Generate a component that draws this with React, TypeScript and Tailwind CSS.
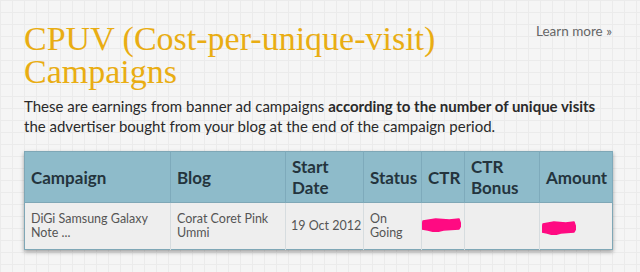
type Row = { campaign: string; blog: string; start: string; status: string };

const rows: Row[] = [
  { campaign: 'DiGi Samsung Galaxy Note ...', blog: 'Corat Coret Pink Ummi', start: '19 Oct 2012', status: 'On Going' },
];

const cols = [
  { label: 'Campaign', w: 'w-[146px]' },
  { label: 'Blog', w: 'w-[115px]' },
  { label: 'Start Date', w: 'w-[78px]' },
  { label: 'Status', w: 'w-[58px]' },
  { label: 'CTR', w: 'w-[43px]' },
  { label: 'CTR Bonus', w: 'w-[75px]' },
  { label: 'Amount', w: 'w-[73px]' },
];

// hidden value, scribbled over
function Scribble({ w, h }: { w: number; h: number }) {
  return (
    <svg width={w} height={h} viewBox={`0 0 ${w} ${h}`} className="block">
      <path
        d={`M1 3 L${w * 0.35} 1 L${w * 0.7} 2 L${w - 2} 1 L${w} ${h * 0.5} L${w - 2} ${h - 3} L${w * 0.55} ${h - 2} L${w * 0.35} ${h} L${w * 0.15} ${h - 2} L0 ${h - 3} Z`}
        fill="#ff0a82"
        stroke="#ff0a82"
        strokeWidth="1.5"
        strokeLinejoin="round"
      />
    </svg>
  );
}

export default function App() {
  return (
    <div className="w-[640px] h-[272px] overflow-hidden bg-[#f5f5f5] bg-[linear-gradient(#ebebeb_1px,transparent_1px),linear-gradient(90deg,#ebebeb_1px,transparent_1px)] bg-[size:12px_12px] font-['Lato',sans-serif] text-[#333]">
      <div className="px-[24px] pt-[22px]">
        <div className="flex justify-between items-start">
          <h1 className="font-['Liberation_Serif',serif] text-[34px] leading-[33px] text-[#e9ad13] w-[440px]">
            CPUV (Cost-per-unique-visit) Campaigns
          </h1>
          <a className="text-[13.5px] text-[#666] -mt-[1px] mr-[4px]">Learn more »</a>
        </div>
        <p className="mt-[8px] text-[15px] leading-[20px] text-[#2a2a2a]">
          These are earnings from banner ad campaigns{' '}
          <span className="font-bold">according to the number of unique visits</span> the advertiser bought from your
          blog at the end of the campaign period.
        </p>
        <table className="mt-[15px] w-[588px] border-collapse border border-[#7fa7b6] shadow-[0_2px_4px_rgba(0,0,0,0.35)] table-fixed">
          <thead>
            <tr className="bg-[#8ebbca] h-[51px]">
              {cols.map((c) => (
                <th
                  key={c.label}
                  className={`${c.w} border-r border-[#7eaabb] px-[6px] text-left align-middle text-[17px] leading-[21px] font-bold text-[#24343d]`}
                >
                  {c.label}
                </th>
              ))}
            </tr>
          </thead>
          <tbody>
            {rows.map((r) => (
              <tr key={r.campaign} className="bg-[#eeeeee] h-[47px] border-t border-[#7fa7b6] text-[12.5px] leading-[14px] text-[#555]">
                <td className="border-r border-[#d6dcdf] px-[6px]">{r.campaign}</td>
                <td className="border-r border-[#d6dcdf] px-[6px]">{r.blog}</td>
                <td className="border-r border-[#d6dcdf] px-[5px] whitespace-nowrap">{r.start}</td>
                <td className="border-r border-[#d6dcdf] px-[6px]">{r.status}</td>
                <td className="border-r border-[#d6dcdf] px-0 pb-[3px]">
                  <Scribble w={39} h={14} />
                </td>
                <td className="border-r border-[#d6dcdf] px-[6px]"></td>
                <td className="px-[2px] pt-[3px]">
                  <Scribble w={34} h={14} />
                </td>
              </tr>
            ))}
          </tbody>
        </table>
      </div>
    </div>
  );
}
